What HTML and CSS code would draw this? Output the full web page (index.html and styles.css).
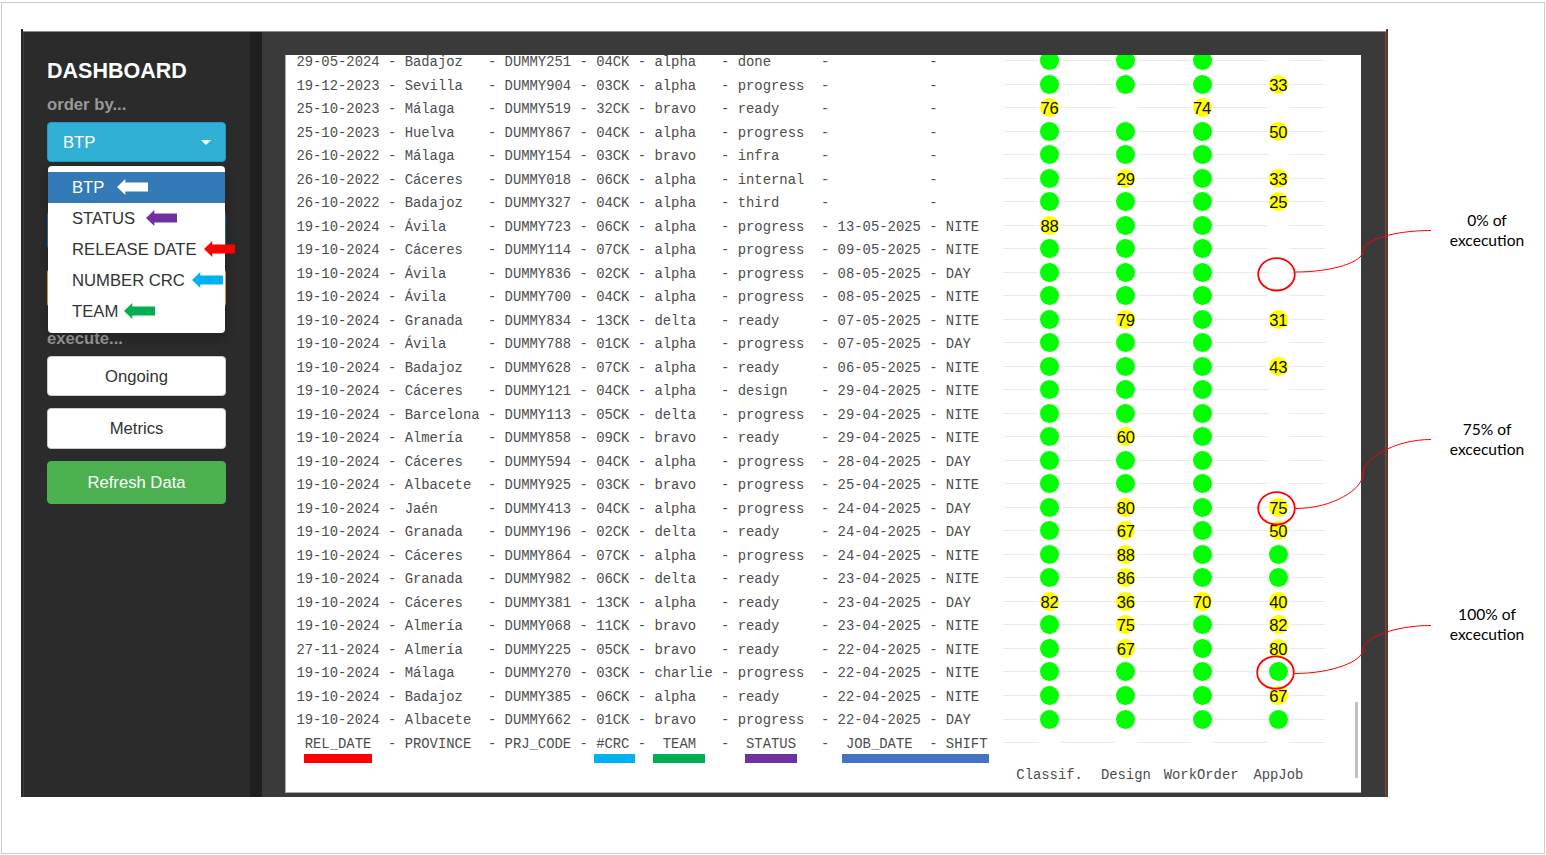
FILE: index.html
```html
<!DOCTYPE html>
<html lang="en">
<head>
<meta charset="utf-8">
<title>Dashboard</title>
<link rel="stylesheet" href="styles.css">
</head>
<body>
<div class="page">
  <div class="app">
    <aside class="sidebar">
      <h1 class="title">DASHBOARD</h1>
      <div class="label">order by...</div>
      <div class="select">
        <button class="btn btn-info"><span>BTP</span><i class="caret"></i></button>
        <ul class="menu">
          <li class="item active">BTP<svg class="arrow arrow-white" viewBox="0 0 31 16"><path d="M0 8 8.3 0V3.5H31V12.5H8.3V16z"/></svg></li>
          <li class="item">STATUS<svg class="arrow arrow-purple" viewBox="0 0 31 16"><path d="M0 8 8.3 0V3.5H31V12.5H8.3V16z"/></svg></li>
          <li class="item">RELEASE DATE<svg class="arrow arrow-red" viewBox="0 0 31 16"><path d="M0 8 8.3 0V3.5H31V12.5H8.3V16z"/></svg></li>
          <li class="item">NUMBER CRC<svg class="arrow arrow-cyan" viewBox="0 0 31 16"><path d="M0 8 8.3 0V3.5H31V12.5H8.3V16z"/></svg></li>
          <li class="item">TEAM<svg class="arrow arrow-green" viewBox="0 0 31 16"><path d="M0 8 8.3 0V3.5H31V12.5H8.3V16z"/></svg></li>
        </ul>
      </div>
      <div class="covered covered-blue"></div>
      <div class="covered covered-orange"></div>
      <div class="label label-run">execute...</div>
      <div class="actions">
        <button class="btn btn-default">Ongoing</button>
        <button class="btn btn-default">Metrics</button>
        <button class="btn btn-success">Refresh Data</button>
      </div>
    </aside>
    <main class="main">
      <section class="chart">
        <div class="rows" id="rows"></div>
        <div class="axis"><span>Classif.</span><span>Design</span><span class="wide">WorkOrder</span><span>AppJob</span></div>
        <i class="scrollbar"></i>
        <i class="mark mark-red"></i>
        <i class="mark mark-cyan"></i>
        <i class="mark mark-green"></i>
        <i class="mark mark-purple"></i>
        <i class="mark mark-blue"></i>
      </section>
    </main>
  </div>
  <svg class="callouts" viewBox="0 0 1546 855">
    <g class="rings">
      <ellipse cx="1276.5" cy="274.3" rx="18.3" ry="16.2"/>
      <ellipse cx="1276.5" cy="508.3" rx="18.3" ry="16.2"/>
      <ellipse cx="1275.5" cy="672.5" rx="18.3" ry="16.2"/>
    </g>
    <g class="leaders">
      <path d="M1295.5 272C1333 272 1363 262 1363 251S1394 230.5 1431 230.5"/>
      <path d="M1295.5 508.5C1333 508.5 1363 489 1363 474S1394 439.5 1431 439.5"/>
      <path d="M1294.5 673.5C1333 673.5 1363 661 1363 649.5S1394 625.5 1431 625.5"/>
    </g>
  </svg>
  <div class="note note-none">0% of<br>excecution</div>
  <div class="note note-part">75% of<br>excecution</div>
  <div class="note note-full">100% of<br>excecution</div>
</div>
<script src="app.js"></script>
</body>
</html>
```
FILE: styles.css
```css
* { box-sizing: border-box; }

body {
  margin: 0;
  background: #fff;
  font-family: "Liberation Sans", Arial, sans-serif;
  font-size: 16.67px;
}

.page {
  position: relative;
  width: 1546px;
  height: 855px;
  padding: 29px 0 0 21px;
  overflow: hidden;
}

.page::before {
  content: "";
  position: absolute;
  inset: 2px 1px 1px 1px;
  border: 1px solid #ccc;
}

.app {
  position: relative;
  display: flex;
  width: 1367px;
  height: 768px;
  border-left: 2px solid #2a2321;
  border-right: 2px solid #6b3323;
}

.app::before {
  content: "";
  position: absolute;
  inset: 0 0 auto 0;
  height: 2px;
  background: #fff;
  border-bottom: 1px solid #8c8e8c;
}

.sidebar {
  width: 239px;
  padding: 28px 0 0 23px;
  background: #2b2b2b;
  border-left: 1px solid #3c3f40;
  border-right: 12px solid #1f1f1f;
}

.title {
  margin: 0;
  height: 28px;
  color: #fff;
  font-size: 21.5px;
  line-height: 28px;
}

.label {
  height: 24px;
  margin-top: 8px;
  color: #999;
  font-weight: bold;
  line-height: 24px;
}

.select {
  position: relative;
  width: 179px;
  margin-top: 5px;
}

.btn {
  display: flex;
  align-items: center;
  justify-content: center;
  width: 179px;
  height: 41px;
  padding: 2px 0 0;
  border: 1px solid #ccc;
  border-radius: 4px;
  font: inherit;
}

.btn-info {
  justify-content: space-between;
  height: 40px;
  padding: 1px 14px 0 15px;
  color: #fff;
  background: #31b0d5;
  border-color: #269abc;
}

.caret {
  margin-bottom: 1px;
  border: 5px solid transparent;
  border-top-color: #fff;
  border-bottom: 0;
}

.menu {
  position: absolute;
  top: 44px;
  left: 1px;
  z-index: 2;
  width: 177px;
  height: 167px;
  margin: 0;
  padding: 6px 0;
  list-style: none;
  background: #fff;
  border-radius: 4px;
  box-shadow: 0 6px 12px rgba(0, 0, 0, 0.2);
}

.item {
  position: relative;
  height: 31px;
  padding-left: 24px;
  color: #333;
  line-height: 31px;
  white-space: nowrap;
}

.item.active { color: #fff; background: #337ab7; }

.arrow {
  position: absolute;
  top: 6.6px;
  width: 31px;
  height: 16px;
}

.arrow-white { left: 69.4px; fill: #fff; }
.arrow-purple { left: 97.6px; fill: #7030a0; }
.arrow-red { left: 156.4px; fill: #f00; }
.arrow-cyan { left: 143.6px; fill: #00b0f0; }
.arrow-green { left: 76.4px; fill: #00b050; }

.covered { width: 179px; border-radius: 4px; }
.covered-blue { height: 38px; margin-top: 49px; background: #2e6da4; }
.covered-orange { height: 38px; margin-top: 20px; background: #e0a050; }

.label-run { margin-top: 19.5px; }

.actions {
  display: flex;
  flex-direction: column;
  gap: 12px;
  margin-top: 5px;
}

.btn-default { height: 40.5px; color: #333; background: #fff; }
.btn-success { height: 43px; color: #fff; background: #4caf50; border-color: #4caf50; }

.main {
  flex: 1;
  padding: 26px 0 0 23px;
  background: #3a3a3a;
  border-right: 1px solid #555;
}

.chart {
  position: relative;
  width: 1076px;
  height: 737.5px;
  overflow: hidden;
  background: #fff;
  border-left: 1px solid #aaa;
  border-bottom: 1px solid #aaa;
}

.rows { margin-top: -6.2px; }

.row {
  display: flex;
  height: 23.52px;
  padding-left: 10.4px;
}

.text {
  width: 706.6px;
  padding-top: 2.2px;
  color: #4d4d4d;
  font: 13.89px/23.5px "Liberation Mono", "Courier New", monospace;
  white-space: pre;
}

.track {
  display: grid;
  grid-template-columns: repeat(4, 76.25px);
  width: 322px;
  padding: 0 8.5px;
  background: linear-gradient(#ebebeb, #ebebeb) 0 50% / 100% 1px no-repeat;
}

.cell {
  display: flex;
  align-items: center;
  justify-content: center;
}

.gap {
  display: flex;
  justify-content: center;
  width: 21.5px;
  min-height: 6px;
  background: #fff;
}

.dot {
  display: flex;
  justify-content: center;
  width: 19px;
  height: 19px;
  border-radius: 50%;
  background: #0f0;
  color: #111;
  font-size: 16.6px;
  line-height: 22.4px;
}

.dot.partial { background: #ff0; }

.axis {
  display: grid;
  grid-template-columns: repeat(4, 76.25px);
  margin: 9px 0 0 725.5px;
  color: #4d4d4d;
  font: 13.89px/24px "Liberation Mono", "Courier New", monospace;
  text-align: center;
}

.wide { margin: 0 1px 0 -1px; }

.scrollbar {
  position: absolute;
  top: 647px;
  right: 3.5px;
  width: 2.5px;
  height: 76px;
  background: #c1c1c1;
}

.mark { position: absolute; top: 698.5px; height: 9px; }
.mark-red { left: 18px; width: 68px; background: #f00; }
.mark-cyan { left: 308px; width: 41px; background: #00b0f0; }
.mark-green { left: 367px; width: 52px; background: #00b050; }
.mark-purple { left: 459px; width: 52px; background: #7030a0; }
.mark-blue { left: 556px; width: 147px; background: #4472c4; }

.callouts {
  position: absolute;
  inset: 0;
  width: 1546px;
  height: 855px;
  fill: none;
  stroke: #f00;
}

.rings { stroke-width: 1.8; }
.leaders { stroke-width: 1; }

.note {
  position: absolute;
  left: 1427px;
  width: 120px;
  color: #000;
  font: 15.6px/20px Lato, Calibri, sans-serif;
  text-align: center;
}

.note-none { top: 210px; }
.note-part { top: 419px; }
.note-full { top: 604px; }
```
FILE: app.js
```js
// date | province | code | crc | team | status | job date | shift | progress per phase
// Progress: G = finished, number = percentage, 0 = not started.
const data = `29-05-2024|Badajoz|251|04|alpha|done|||G G G 0
19-12-2023|Sevilla|904|03|alpha|progress|||G G G 33
25-10-2023|Málaga|519|32|bravo|ready|||76 0 74 0
25-10-2023|Huelva|867|04|alpha|progress|||G G G 50
26-10-2022|Málaga|154|03|bravo|infra|||G G G 0
26-10-2022|Cáceres|018|06|alpha|internal|||G 29 G 33
26-10-2022|Badajoz|327|04|alpha|third|||G G G 25
19-10-2024|Ávila|723|06|alpha|progress|13-05-2025|NITE|88 G G 0
19-10-2024|Cáceres|114|07|alpha|progress|09-05-2025|NITE|G G G 0
19-10-2024|Ávila|836|02|alpha|progress|08-05-2025|DAY|G G G 0
19-10-2024|Ávila|700|04|alpha|progress|08-05-2025|NITE|G G G 0
19-10-2024|Granada|834|13|delta|ready|07-05-2025|NITE|G 79 G 31
19-10-2024|Ávila|788|01|alpha|progress|07-05-2025|DAY|G G G 0
19-10-2024|Badajoz|628|07|alpha|ready|06-05-2025|NITE|G G G 43
19-10-2024|Cáceres|121|04|alpha|design|29-04-2025|NITE|G G G 0
19-10-2024|Barcelona|113|05|delta|progress|29-04-2025|NITE|G G G 0
19-10-2024|Almería|858|09|bravo|ready|29-04-2025|NITE|G 60 G 0
19-10-2024|Cáceres|594|04|alpha|progress|28-04-2025|DAY|G G G 0
19-10-2024|Albacete|925|03|bravo|progress|25-04-2025|NITE|G G G 0
19-10-2024|Jaén|413|04|alpha|progress|24-04-2025|DAY|G 80 G 75
19-10-2024|Granada|196|02|delta|ready|24-04-2025|DAY|G 67 G 50
19-10-2024|Cáceres|864|07|alpha|progress|24-04-2025|NITE|G 88 G G
19-10-2024|Granada|982|06|delta|ready|23-04-2025|NITE|G 86 G G
19-10-2024|Cáceres|381|13|alpha|ready|23-04-2025|DAY|82 36 70 40
19-10-2024|Almería|068|11|bravo|ready|23-04-2025|NITE|G 75 G 82
27-11-2024|Almería|225|05|bravo|ready|22-04-2025|NITE|G 67 G 80
19-10-2024|Málaga|270|03|charlie|progress|22-04-2025|NITE|G G G G
19-10-2024|Badajoz|385|06|alpha|ready|22-04-2025|NITE|G G G 67
19-10-2024|Albacete|662|01|bravo|progress|22-04-2025|DAY|G G G G`;

const widths = [10, 9, 8, 4, 7, 9, 10, 5];

function cell(value) {
  let dot = "";
  if (value === "G") dot = '<span class="dot"></span>';
  else if (value !== "0") dot = `<span class="dot partial">${value}</span>`;
  return `<div class="cell"><div class="gap">${dot}</div></div>`;
}

function row(fields, phases) {
  const text = fields.map((f, i) => f.padEnd(widths[i])).join(" - ");
  return `<div class="row"><div class="text">${text}</div><div class="track">${phases.map(cell).join("")}</div></div>`;
}

const rows = data.split("\n").map((line) => {
  const f = line.split("|");
  const phases = f.pop().split(" ");
  f[2] = "DUMMY" + f[2];
  f[3] += "CK";
  return row(f, phases);
});

rows.push(row([" REL_DATE", "PROVINCE", "PRJ_CODE", "#CRC", " TEAM", " STATUS", " JOB_DATE", "SHIFT"], ["0", "0", "0", "0"]));
document.getElementById("rows").innerHTML = rows.join("");
```
